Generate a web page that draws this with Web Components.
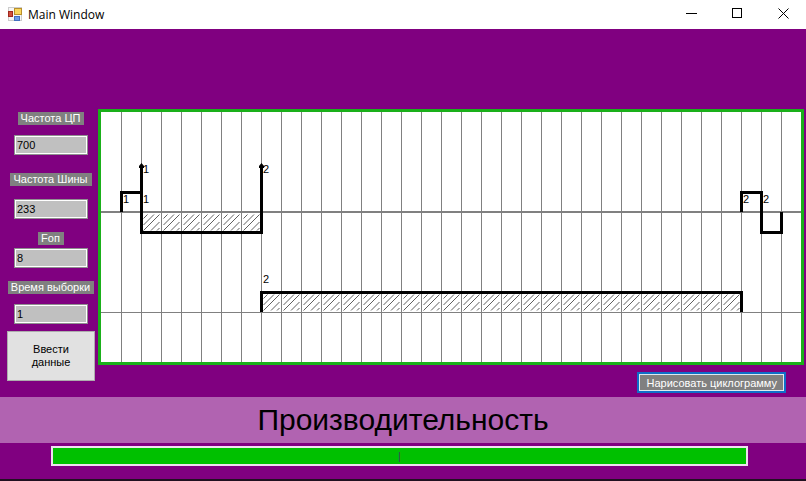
<!DOCTYPE html>
<html lang="ru">
<head>
<meta charset="utf-8">
<title>Main Window</title>
<style>
body { margin: 0; }
</style>
</head>
<body>
<main-window></main-window>
<script>
const define = (name, html, setup) => customElements.define(name, class extends HTMLElement {
  connectedCallback() {
    if (this.shadowRoot) return;
    const root = this.attachShadow({ mode: 'open' });
    const t = document.createElement('template');
    t.innerHTML = html;
    root.append(t.content.cloneNode(true));
    if (setup) setup(this, root);
  }
});

define('title-bar', `
<style>
:host { display: flex; align-items: center; height: 29px; background: #fff; color: #000; font: 12px/16px "Open Sans", "Noto Sans", sans-serif; }
.icon { margin: 0 6px 2px 8px; flex: none; }
.name { flex: 1; }
button { width: 46px; height: 29px; padding: 0 0 3px; border: 0; background: none; display: grid; place-items: center; }
</style>
<svg class="icon" width="14" height="14" viewBox="0 0 14 14">
  <rect x=".5" y=".5" width="13" height="13" fill="#f6f6f6" stroke="#ccc"/>
  <rect x="6.500" y="1.500" width="7" height="6" fill="#fad65c" stroke="#b8902c"/>
  <rect x=".5" y="4.500" width="4" height="5" fill="#d0503c" stroke="#a02820"/>
  <rect x="6.500" y="9.500" width="5" height="4" fill="#6c9ce8" stroke="#4470c0"/>
</svg>
<span class="name"><slot></slot></span>
<button aria-label="Свернуть"><svg width="11" height="11"><path d="M0 5.500H11" stroke="#000"/></svg></button>
<button aria-label="Развернуть"><svg width="11" height="11"><rect x=".5" y=".5" width="9" height="9" fill="none" stroke="#000"/></svg></button>
<button aria-label="Закрыть"><svg width="11" height="11"><path d="M.5.5l10 10M10.500.5l-10 10" stroke="#000"/></svg></button>
`);

define('data-field', `
<style>
:host { display: flex; flex-direction: column; align-items: center; gap: var(--gap, 10px); }
label { background: #808080; color: #fff; line-height: 13px; padding: 0 4px 0 3px; white-space: nowrap; }
input { box-sizing: border-box; width: 74px; height: 20px; margin: 0; padding: 0 2px; border: 1px solid #909090; outline: 1px solid #fff; outline-offset: -2px; background: #c0c0c0; color: #000; font: inherit; border-radius: 0; }
</style>
<label for="v"></label><input id="v">
`, (h, r) => {
  r.querySelector('label').textContent = h.getAttribute('label');
  r.querySelector('input').value = h.getAttribute('value');
});

define('cycle-chart', `
<style>
:host { display: block; box-sizing: border-box; border: 3px solid #1ab01a; background: #fff; }
svg { display: block; width: 100%; height: 250px; }
text { font-size: 11px; fill: #000; }
</style>
<svg role="img" aria-label="Циклограмма">
  <defs>
    <pattern id="cols" width="20" height="250" patternUnits="userSpaceOnUse"><rect width="1" height="250" fill="#808080"/></pattern>
    <pattern id="hatch" width="20" height="20" patternUnits="userSpaceOnUse">
      <path d="M2.500 6.500L6.500 2.500M2.500 13L13 2.500M2.500 18.500L18.500 2.500M10 18.500L18.500 10M16 18.500L18.500 16" stroke="#606060" fill="none"/>
    </pattern>
  </defs>
  <rect x="1" width="100%" height="250" fill="url(#cols)"/>
  <path d="M0 100H4000" stroke="#808080" stroke-width="2"/>
  <path d="M0 200.500H4000" stroke="#808080"/>
  <rect x="40" y="100" width="120" height="20" fill="url(#hatch)"/>
  <rect x="160" y="180" width="480" height="20" fill="url(#hatch)"/>
  <path fill="none" stroke="#000" stroke-width="3" d="M20.500 100V80.500H40.500M40.500 54V120.500H160.500V54M160.500 200V180.500H640.500V200M640.500 100V80.500H660.500V120.500H680.500V100"/>
  <path d="M40.500 51l2.500 3v2h-5v-2zM160.500 51l2.500 3v2h-5v-2z"/>
  <text x="42" y="61">1</text><text x="22" y="91">1</text><text x="42" y="91">1</text>
  <text x="162" y="61">2</text><text x="162" y="171">2</text>
  <text x="642" y="91">2</text><text x="662" y="91">2</text>
</svg>
`);

define('main-window', `
<style>
:host { display: flex; flex-direction: column; box-sizing: border-box; min-height: 100vh; background: #800080; border-bottom: 2px solid #201020; color: #000; font: 11px/14px "Liberation Sans", Arial, sans-serif; }
.body { display: grid; grid-template-columns: 98px 1fr; padding: 80px 2px 0 0; }
.fields { display: flex; flex-direction: column; align-items: center; padding: 3px 0 0 4px; }
data-field + data-field { margin-top: 13px; }
data-field + .roomy { --gap: 13px; margin-top: 18px; }
.tight { --gap: 3px; }
.enter { width: 88px; height: 50px; margin: 7px 0 0; padding: 0 16px; border: 1px solid #adadad; background: #e1e1e1; color: #000; font: inherit; line-height: 13px; }
.actions { display: flex; justify-content: flex-end; margin: 7px 18px 4px 0; }
.draw { height: 21px; padding: 0 7px; border: 2px solid #0f6fc8; outline: 1px solid #e0e8f0; outline-offset: -3px; background: #808080; color: #fff; font: inherit; }
h1 { margin: 0; background: #b163b1; text-align: center; font-size: 30px; font-weight: 400; line-height: 46px; }
.result { box-sizing: border-box; height: 20px; margin: 3px 58px 0 51px; padding: 0; border: 2px solid #f0e0f0; background: #00c000; color: #404060; text-align: center; font: inherit; border-radius: 0; }
</style>
<title-bar>Main Window</title-bar>
<div class="body">
  <div class="fields">
    <data-field label="Частота ЦП" value="700"></data-field>
    <data-field class="roomy" label="Частота Шины" value="233"></data-field>
    <data-field class="tight" label="Fоп" value="8"></data-field>
    <data-field label="Время выборки" value="1"></data-field>
    <button class="enter">Ввести данные</button>
  </div>
  <div>
    <cycle-chart></cycle-chart>
    <div class="actions"><button class="draw">Нарисовать циклограмму</button></div>
  </div>
</div>
<h1>Производительность</h1>
<input class="result" aria-label="Производительность" value="|">
`);
</script>
</body>
</html>
